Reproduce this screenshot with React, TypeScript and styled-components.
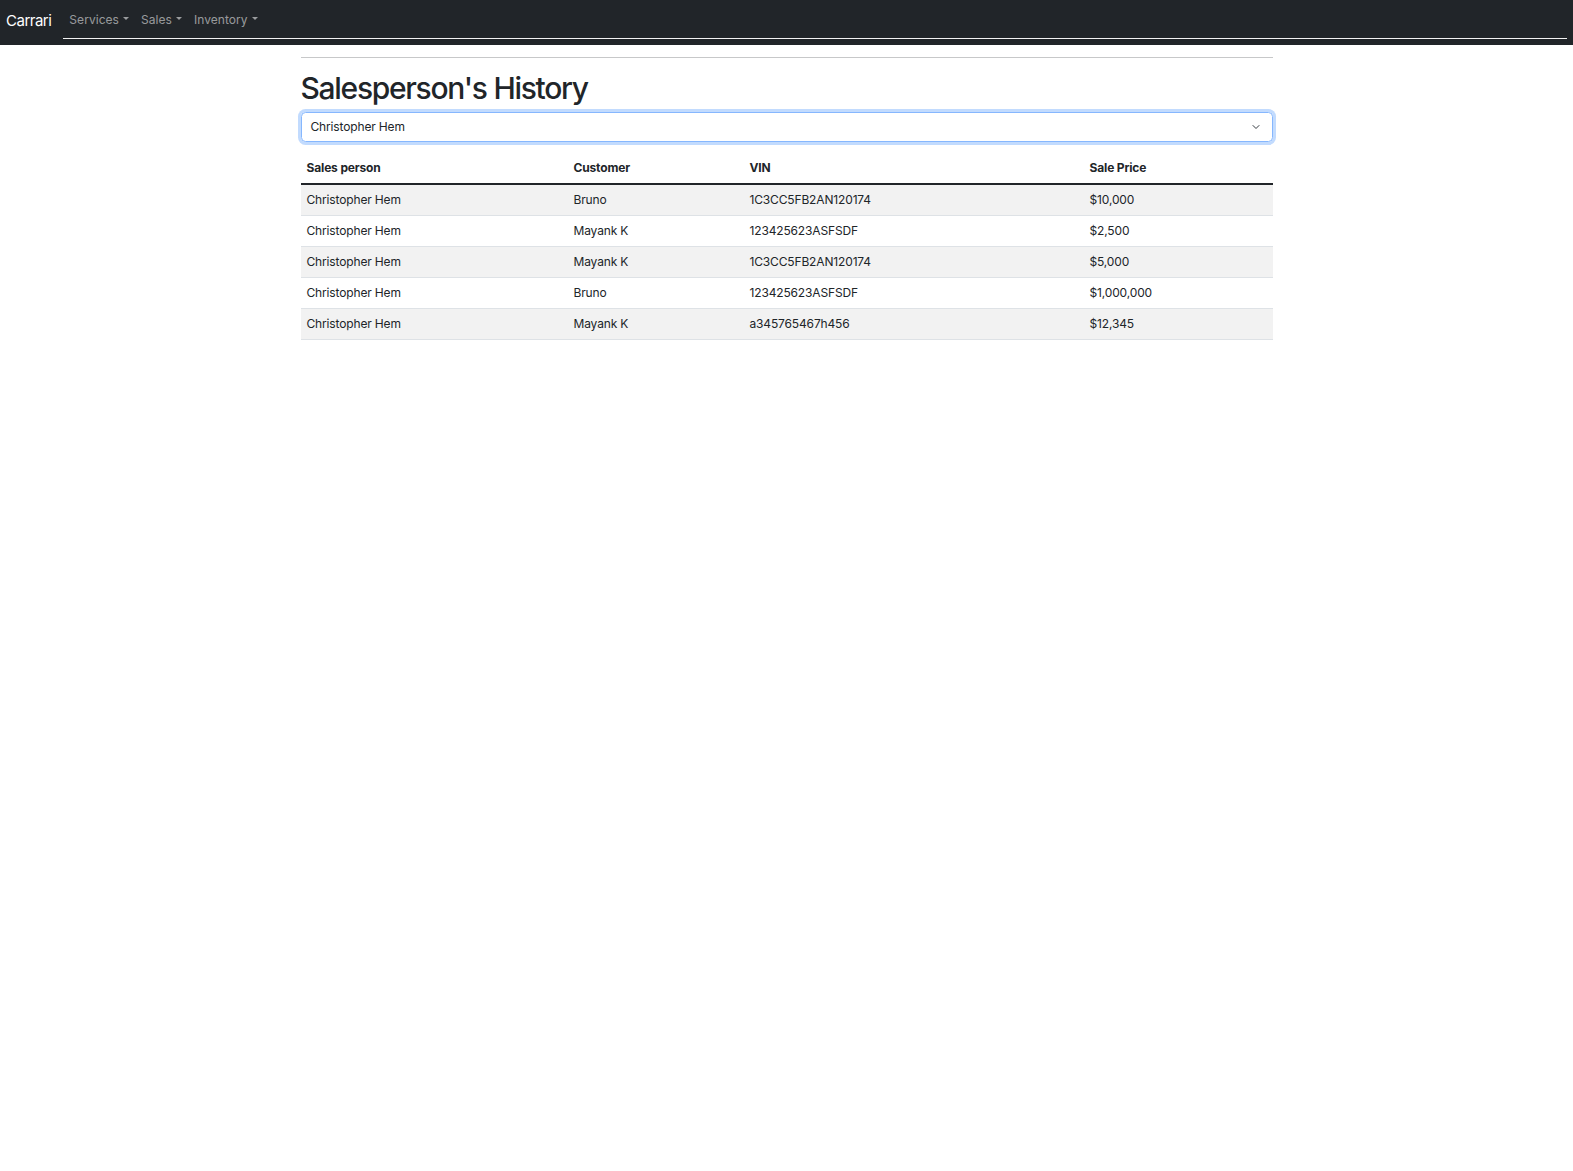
import React from 'react';
import styled, { createGlobalStyle } from 'styled-components';

const FONT = "Inter, 'Noto Sans', 'Liberation Sans', sans-serif";
const DARK = '#212529';

const GlobalStyle = createGlobalStyle`
  html, body {
    margin: 0;
    padding: 0;
    background: #fff;
    color: ${DARK};
    font-family: ${FONT};
    font-size: 12px;
    line-height: 1.5;
    letter-spacing: -0.15px;
  }
`;

interface Sale {
  person: string;
  customer: string;
  vin: string;
  price: string;
}

const SALES: Sale[] = [
  { person: 'Christopher Hem', customer: 'Bruno', vin: '1C3CC5FB2AN120174', price: '$10,000' },
  { person: 'Christopher Hem', customer: 'Mayank K', vin: '123425623ASFSDF', price: '$2,500' },
  { person: 'Christopher Hem', customer: 'Mayank K', vin: '1C3CC5FB2AN120174', price: '$5,000' },
  { person: 'Christopher Hem', customer: 'Bruno', vin: '123425623ASFSDF', price: '$1,000,000' },
  { person: 'Christopher Hem', customer: 'Mayank K', vin: 'a345765467h456', price: '$12,345' }
];

const COLS = [
  { label: 'Sales person', width: 267 },
  { label: 'Customer', width: 176 },
  { label: 'VIN', width: 340 },
  { label: 'Sale Price', width: 189 }
];

const Navbar = styled.nav`
  display: flex;
  align-items: flex-start;
  height: 45px;
  box-sizing: border-box;
  padding: 6px;
  background: ${DARK};
`;

const Brand = styled.a`
  display: flex;
  align-items: center;
  height: 31px;
  margin-right: 12px;
  color: #fff;
  font-size: 15px;
  text-decoration: none;
  letter-spacing: -0.5px;
`;

const NavList = styled.ul`
  display: flex;
  flex: 1;
  align-items: flex-start;
  margin: 0;
  padding: 0;
  list-style: none;
  height: 33px;
  box-sizing: border-box;
  border-bottom: 1px solid #f2f2f2;
`;

const NavLink = styled.li`
  display: flex;
  align-items: center;
  padding: 0 6px;
  height: 27px;
  color: rgba(255, 255, 255, 0.55);
  font-size: 12px;
  letter-spacing: 0.05px;

  &::after {
    content: '';
    margin-left: 4px;
    margin-top: -2px;
    border-top: 3px solid currentColor;
    border-left: 3px solid transparent;
    border-right: 3px solid transparent;
  }
`;

const Container = styled.main`
  width: 972px;
  margin: 0 auto;
`;

const Rule = styled.hr`
  margin: 12px 0;
  border: 0;
  border-top: 1px solid rgba(33, 37, 41, 0.25);
`;

const Title = styled.h1`
  margin: 0 0 6px;
  font-size: 30px;
  font-weight: 500;
  line-height: 36px;
  letter-spacing: -1.3px;
`;

const SelectBox = styled.div`
  display: flex;
  align-items: center;
  justify-content: space-between;
  height: 28px;
  margin-bottom: 12px;
  padding: 0 11px 0 9px;
  border: 1px solid #86b7fe;
  border-radius: 4.5px;
  box-shadow: 0 0 0 3px rgba(13, 110, 253, 0.25);
  font-size: 12px;
`;

const Table = styled.table`
  width: 100%;
  border-collapse: collapse;
  table-layout: fixed;
  font-size: 12px;
`;

const Th = styled.th`
  padding: 5px 6px 6px;
  height: 30px;
  box-sizing: border-box;
  text-align: left;
  font-weight: 700;
  border-bottom: 2px solid ${DARK};
`;

const Row = styled.tr<{ $striped: boolean }>`
  background: ${(p) => (p.$striped ? '#f2f2f2' : '#fff')};
`;

const Td = styled.td`
  padding: 6px;
  height: 31px;
  box-sizing: border-box;
  line-height: 18px;
  border-bottom: 1px solid #dee2e6;
`;

function Chevron () {
  return (
    <svg width='10' height='8' viewBox='0 0 16 16' fill='none'>
      <path d='M2 5l6 6 6-6' stroke='#343a40' strokeWidth='2' strokeLinecap='round' strokeLinejoin='round' />
    </svg>
  );
}

export default function App () {
  return (
    <>
      <GlobalStyle />
      <Navbar>
        <Brand href='#'>Carrari</Brand>
        <NavList>
          <NavLink>Services</NavLink>
          <NavLink>Sales</NavLink>
          <NavLink>Inventory</NavLink>
        </NavList>
      </Navbar>
      <Container>
        <Rule />
        <Title>Salesperson's History</Title>
        <SelectBox>
          <span>Christopher Hem</span>
          <Chevron />
        </SelectBox>
        <Table>
          <colgroup>
            {COLS.map((c) => <col key={c.label} style={{ width: c.width }} />)}
          </colgroup>
          <thead>
            <tr>
              {COLS.map((c) => <Th key={c.label}>{c.label}</Th>)}
            </tr>
          </thead>
          <tbody>
            {SALES.map((s, i) => (
              <Row key={i} $striped={i % 2 === 0}>
                <Td>{s.person}</Td>
                <Td>{s.customer}</Td>
                <Td>{s.vin}</Td>
                <Td>{s.price}</Td>
              </Row>
            ))}
          </tbody>
        </Table>
      </Container>
    </>
  );
}
